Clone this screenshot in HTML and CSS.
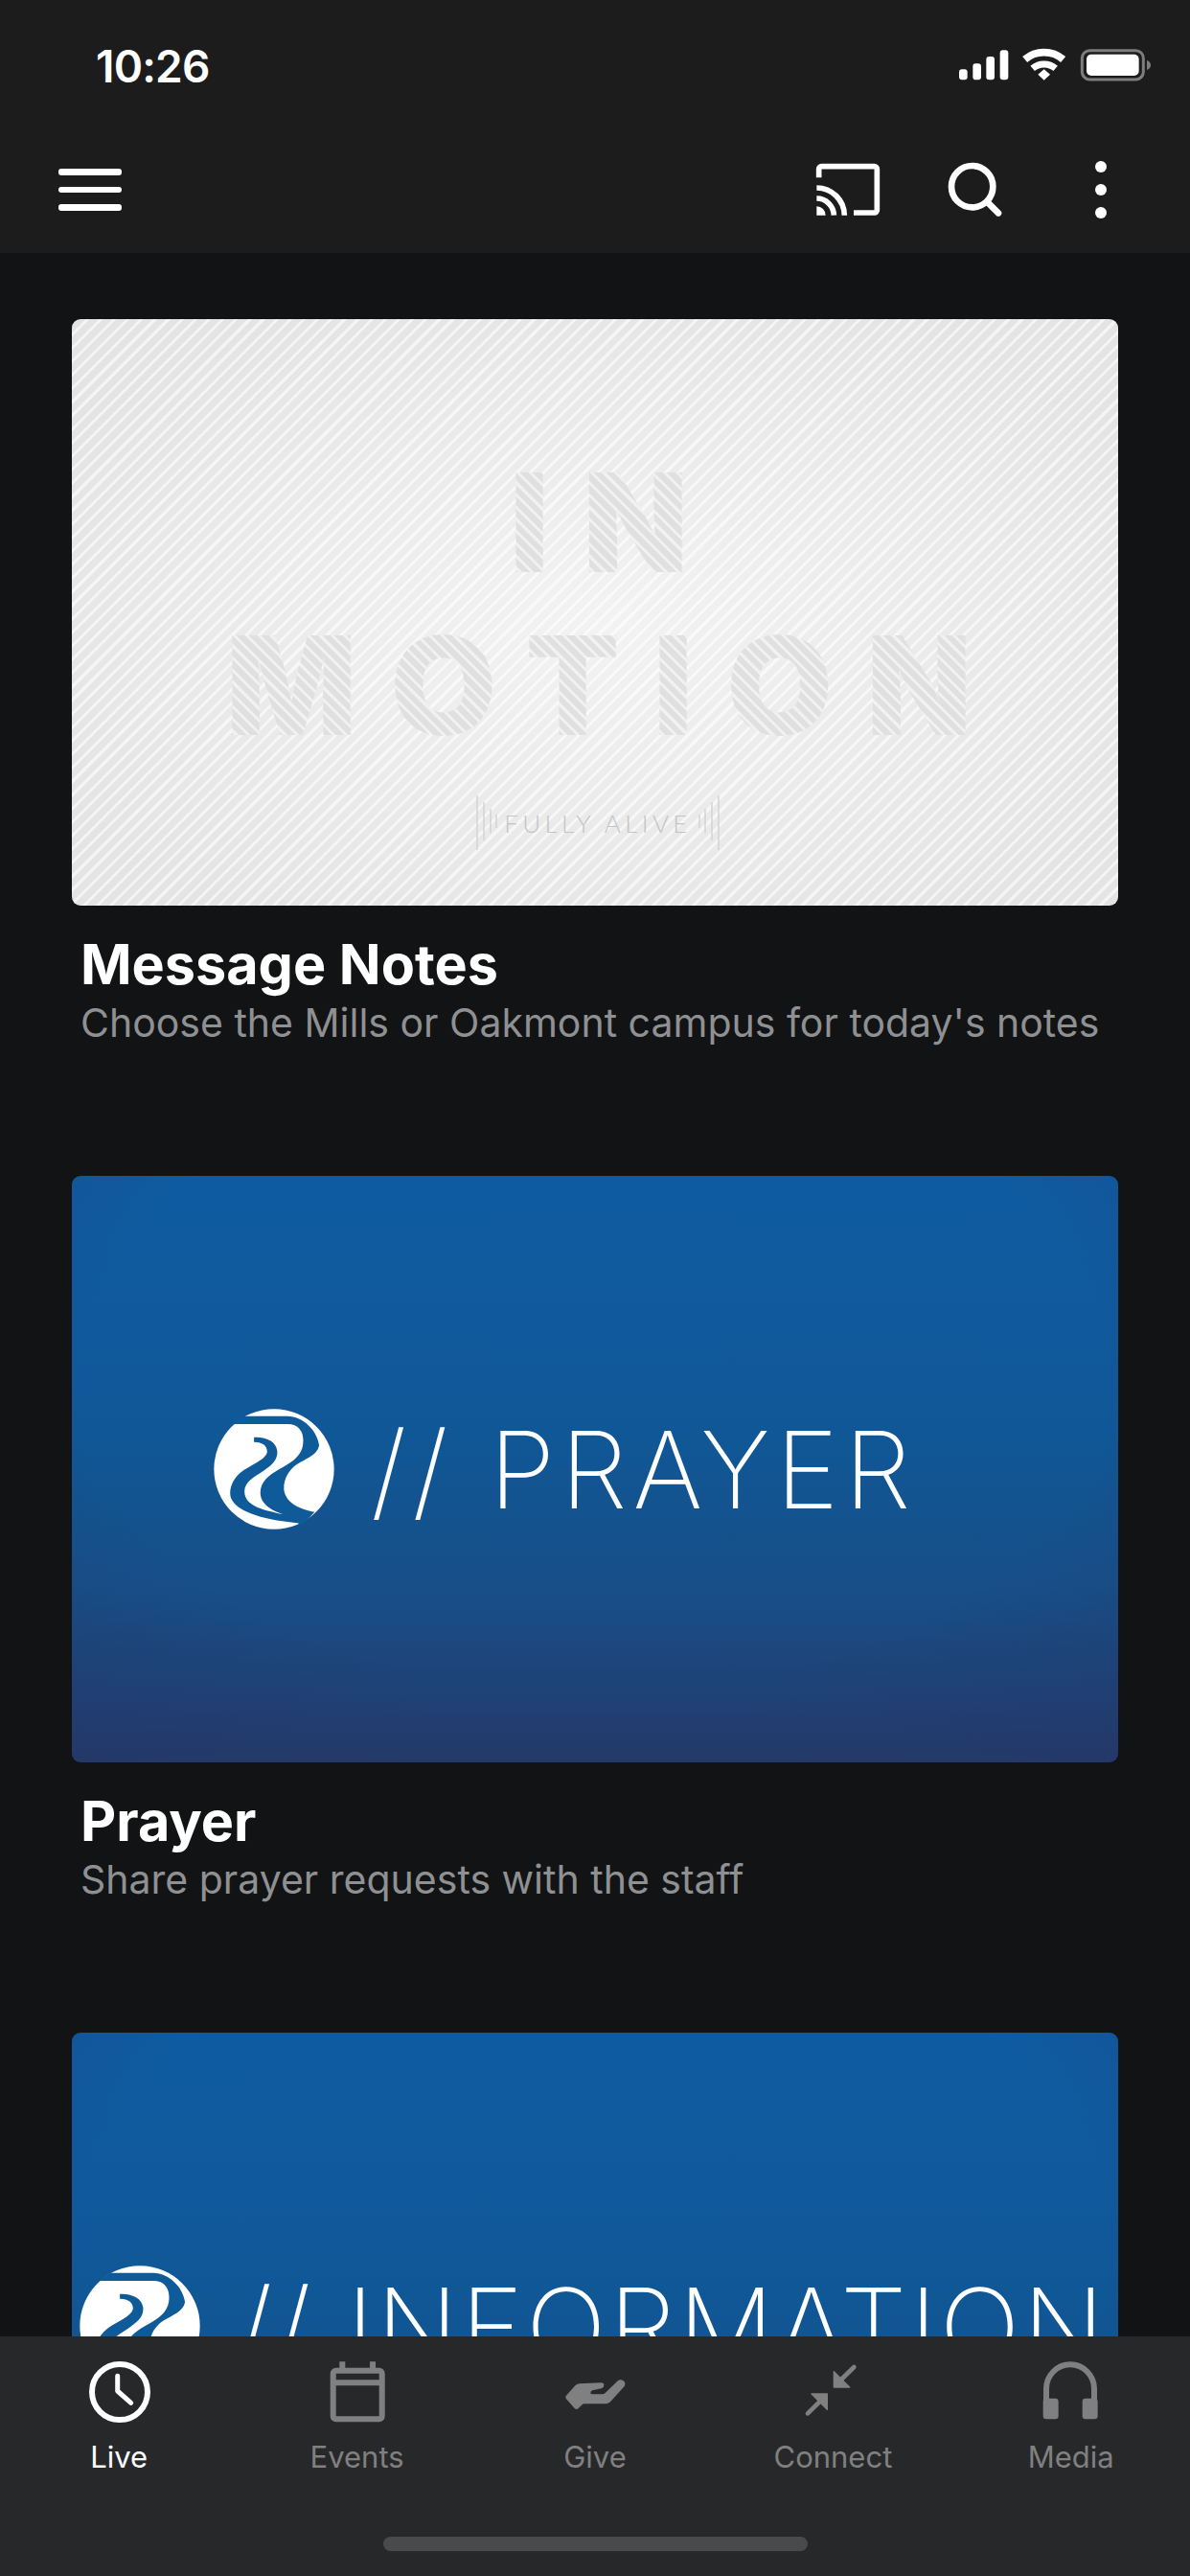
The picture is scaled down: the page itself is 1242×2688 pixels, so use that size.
FILE: index.html
```html
<!DOCTYPE html>
<html lang="en">
<head>
<meta charset="utf-8">
<title>Live</title>
<link rel="stylesheet" href="styles.css">
</head>
<body>
<svg class="defs" width="0" height="0" aria-hidden="true">
  <symbol id="logo" viewBox="68 90 380 380">
    <circle cx="258" cy="280" r="189" fill="#fff"/>
    <path class="river" d="M165 113 L300 113 C350 113 395 160 400 205 C395 235 360 245 330 265 C300 285 285 320 290 350 C300 390 340 405 385 415 L345 456 L285 422 C250 410 215 390 215 355 C215 320 240 300 275 280 C320 255 350 235 350 190 C350 160 335 138 300 138 L128 138 Z"/>
    <path class="river" d="M195 195 C225 195 238 210 236 228 C230 250 190 265 160 285 C125 310 115 345 122 370 C140 415 220 440 350 452 L385 415 L285 422 C235 410 165 400 165 350 C165 320 195 305 225 285 C260 262 270 245 268 222 C265 195 235 178 195 180 Z"/>
  </symbol>
</svg>
<div class="phone">
  <header class="topbar">
    <div class="status">
      <span class="time">10:26</span>
      <svg class="status-icons" viewBox="0 0 690 180">
        <g fill="#fff">
          <rect x="57" y="100" width="26" height="33" rx="9"/>
          <rect x="100" y="82" width="26" height="51" rx="9"/>
          <rect x="142" y="60" width="26" height="73" rx="9"/>
          <rect x="185" y="40" width="26" height="93" rx="9"/>
          <path d="M304 116 L323 100 L342 116 L323 134 Z"/>
        </g>
        <g fill="none" stroke="#fff">
          <path d="M263 69 A 92 92 0 0 1 383 69" stroke-width="23"/>
          <path d="M287 97 A 56 56 0 0 1 359 97" stroke-width="21"/>
        </g>
        <rect x="442" y="41" width="192" height="91" rx="24" fill="none" stroke="#7d7d7d" stroke-width="9"/>
        <rect x="456" y="53" width="164" height="67" rx="15" fill="#fff"/>
        <path d="M645 72 C653 75 657 80 657 87 C657 94 653 99 645 102 Z" fill="#7d7d7d"/>
      </svg>
    </div>
    <nav class="navrow">
      <div class="burger"><span></span><span></span><span></span></div>
      <div class="nav-actions">
        <svg class="icon" viewBox="34 19 252 252">
          <g fill="none" stroke="#fff" stroke-width="17">
            <path d="M69 107 V80 A8 8 0 0 1 77 72 H243 A8 8 0 0 1 251 80 V209 A8 8 0 0 1 243 217 H178"/>
            <path d="M62 139 A87 87 0 0 1 149 225"/>
            <path d="M62 172 A54 54 0 0 1 116 225"/>
          </g>
          <path d="M62 197 A28 28 0 0 1 90 225 H62 Z" fill="#fff"/>
        </svg>
        <svg class="icon" viewBox="429 19 252 252">
          <circle cx="548" cy="135" r="65" fill="none" stroke="#fff" stroke-width="20"/>
          <path d="M597 185 L630 218" stroke="#fff" stroke-width="20" stroke-linecap="round"/>
        </svg>
        <svg class="icon" viewBox="826 18 252 252">
          <g fill="#fff">
            <circle cx="952" cy="72" r="18"/>
            <circle cx="952" cy="144" r="18"/>
            <circle cx="952" cy="216" r="18"/>
          </g>
        </svg>
      </div>
    </nav>
  </header>

  <main class="feed">
    <article class="card">
      <div class="art art-motion">
        <div class="motion-word">IN</div>
        <div class="motion-word">MOTION</div>
        <div class="tagline">
          <svg class="ticks" viewBox="0 0 22 58">
            <path d="M1 0 V57 M8 7 V47 M15 14 V39 M21 20 V34"/>
          </svg>
          <span>FULLY ALIVE</span>
          <svg class="ticks" viewBox="0 0 22 58">
            <path d="M1 20 V34 M7 14 V39 M14 7 V47 M21 0 V57"/>
          </svg>
        </div>
      </div>
      <h2 class="card-title">Message Notes</h2>
      <p class="card-sub">Choose the Mills or Oakmont campus for today's notes</p>
    </article>

    <article class="card">
      <div class="art art-blue art-prayer">
        <svg class="logo"><use href="#logo"/></svg>
        <span class="art-label">// PRAYER</span>
      </div>
      <h2 class="card-title">Prayer</h2>
      <p class="card-sub">Share prayer requests with the staff</p>
    </article>

    <article class="card">
      <div class="art art-blue art-info">
        <svg class="logo"><use href="#logo"/></svg>
        <span class="art-label art-label-info">// INFORMATION</span>
      </div>
    </article>
  </main>

  <footer class="tabbar">
    <div class="tabs">
      <div class="tab tab-active">
        <svg class="icon" viewBox="-1 0 84 84">
          <circle cx="42" cy="42" r="29" fill="none" stroke="currentColor" stroke-width="6"/>
          <path d="M39.7 25.3 V41 L53.7 53.3" fill="none" stroke="currentColor" stroke-width="5" stroke-linecap="round" stroke-linejoin="round"/>
        </svg>
        <span>Live</span>
      </div>
      <div class="tab">
        <svg class="icon" viewBox="0 0 84 84">
          <rect x="16.7" y="19.7" width="51" height="50.6" rx="3" fill="none" stroke="currentColor" stroke-width="6"/>
          <path d="M14 29.3 H70 V35.3 H14 Z M23.3 10.3 H29.3 V18 H23.3 Z M55 10.3 H61 V18 H55 Z" fill="currentColor"/>
        </svg>
        <span>Events</span>
      </div>
      <div class="tab">
        <svg class="icon" viewBox="24 12 252 252">
          <path fill="currentColor" d="M60 149 L88 118 Q92 113 100 112 L170 109 Q178 109 178 117 Q178 125 170 127 L142 133 Q136 135 136 140 Q136 145 142 145 H172 Q178 145 182 141 L220 104 Q228 97 238 102 Q248 110 242 120 L198 169 Q192 175 184 175 H118 Q112 175 108 179 L98 189 Q92 195 86 189 L60 160 Q55 155 60 149 Z"/>
        </svg>
        <span>Give</span>
      </div>
      <div class="tab">
        <svg class="icon" viewBox="22 12 252 252">
          <g fill="currentColor" stroke="currentColor" stroke-width="4" stroke-linejoin="round">
            <path d="M152 74 V123 H201 Z"/>
            <path d="M131 144 H82 L131 193 Z"/>
          </g>
          <path d="M172 102 L215 60 M111 165 L70 205" stroke="currentColor" stroke-width="14" stroke-linecap="round"/>
        </svg>
        <span>Connect</span>
      </div>
      <div class="tab">
        <svg class="icon" viewBox="767 12 252 252">
          <path d="M815 175 V128 A75 76 0 0 1 965 128 V175" fill="none" stroke="currentColor" stroke-width="18"/>
          <rect x="805" y="158" width="48" height="65" rx="10" fill="currentColor"/>
          <rect x="928" y="158" width="48" height="65" rx="10" fill="currentColor"/>
        </svg>
        <span>Media</span>
      </div>
    </div>
    <div class="home-indicator"></div>
  </footer>
</div>
</body>
</html>
```

FILE: styles.css
```css
* {
  box-sizing: border-box;
}

html,
body {
  margin: 0;
  padding: 0;
  background: #121315;
}

.defs {
  display: block;
  height: 0;
}

.phone {
  width: 1242px;
  height: 2688px;
  display: flex;
  flex-direction: column;
  overflow: hidden;
  background: #121315;
  font-family: Inter, "Liberation Sans", sans-serif;
  color: #fff;
}

.topbar {
  flex: none;
  height: 264px;
  background: #1c1c1d;
}

.status {
  height: 132px;
  display: flex;
  align-items: center;
  justify-content: space-between;
  padding: 6px 30px 0 100px;
}

.time {
  font-size: 46px;
  font-weight: 600;
  letter-spacing: -0.8px;
  line-height: 1;
}

.status-icons {
  width: 230px;
  height: 60px;
}

.navrow {
  height: 132px;
  display: flex;
  align-items: center;
  justify-content: space-between;
  padding: 0 51px 0 61px;
}

.burger {
  width: 66px;
  display: flex;
  flex-direction: column;
  gap: 12px;
}

.burger span {
  display: block;
  height: 6.5px;
  border-radius: 3px;
  background: #fff;
}

.nav-actions {
  display: flex;
  gap: 48px;
}

.icon {
  display: block;
  width: 84px;
  height: 84px;
}

.feed {
  flex: 1;
  min-height: 0;
  overflow: hidden;
  padding: 69px 75px 0;
  display: flex;
  flex-direction: column;
  gap: 282px;
}

.card {
  flex: none;
  height: 612px;
}

.art {
  height: 612px;
  border-radius: 9px;
  overflow: hidden;
}

.art-motion {
  padding-top: 127px;
  display: flex;
  flex-direction: column;
  align-items: center;
  background:
    radial-gradient(ellipse 60% 60% at 50% 52%, rgba(255, 255, 255, 0.55), rgba(255, 255, 255, 0) 100%),
    repeating-linear-gradient(135deg, #f4f4f4 0 3px, #e4e4e4 3px 10px);
}

.motion-word {
  height: 170px;
  line-height: 170px;
  padding-left: 43px;
  font-size: 143px;
  font-weight: 900;
  letter-spacing: 35px;
  color: transparent;
  background: repeating-linear-gradient(45deg, #e0e0e0 0 6px, #f1f1f1 6px 9px);
  -webkit-background-clip: text;
  background-clip: text;
}

.tagline {
  margin-top: 30px;
  height: 58px;
  padding-left: 6px;
  display: flex;
  align-items: center;
  gap: 7px;
  font-family: Lato, "Liberation Sans", sans-serif;
  font-size: 26px;
  font-weight: 300;
  letter-spacing: 4.4px;
  color: #c4c4c4;
}

.ticks {
  width: 22px;
  height: 58px;
  fill: none;
  stroke: #d4d4d4;
  stroke-width: 1.5;
}

.card-title {
  margin: 26px 0 0;
  padding-left: 9px;
  font-size: 57.5px;
  line-height: 70px;
  font-weight: 700;
  color: #fff;
}

.card-sub {
  margin: 0;
  padding-left: 9px;
  font-size: 41px;
  line-height: 52px;
  font-weight: 400;
  color: #8f9092;
  white-space: nowrap;
}

.art-blue {
  display: flex;
  align-items: center;
  gap: 38px;
  background:
    radial-gradient(ellipse 90% 95% at 50% 35%, rgba(34, 54, 104, 0) 55%, rgba(34, 54, 104, 0.5) 100%),
    linear-gradient(#0f5ba2 0%, #105796 45%, #174f88 70%, #1f4277 88%, #253a68 100%);
}

.art-prayer {
  padding-left: 148px;
}

.art-info {
  padding-left: 8px;
}

.logo {
  flex: none;
  width: 126px;
  height: 126px;
}

.river {
  fill: #0f5a98;
}

.art-label {
  font-size: 111px;
  font-weight: 200;
  letter-spacing: 6px;
  color: #fff;
  white-space: nowrap;
  line-height: 1;
}

.art-label-info {
  letter-spacing: 3px;
}

.tabbar {
  flex: none;
  height: 250px;
  background: #27282a;
  display: flex;
  flex-direction: column;
  align-items: center;
  position: relative;
  z-index: 1;
}

.tabs {
  width: 100%;
  display: grid;
  grid-template-columns: repeat(5, 1fr);
  padding-top: 16px;
}

.tab {
  display: flex;
  flex-direction: column;
  align-items: center;
  color: #808080;
  font-size: 31px;
  line-height: 36px;
  gap: 8px;
}

.tab-active {
  color: #fff;
}

.home-indicator {
  margin-top: 65px;
  width: 443px;
  height: 15px;
  border-radius: 8px;
  background: #4a4a4a;
}
```
